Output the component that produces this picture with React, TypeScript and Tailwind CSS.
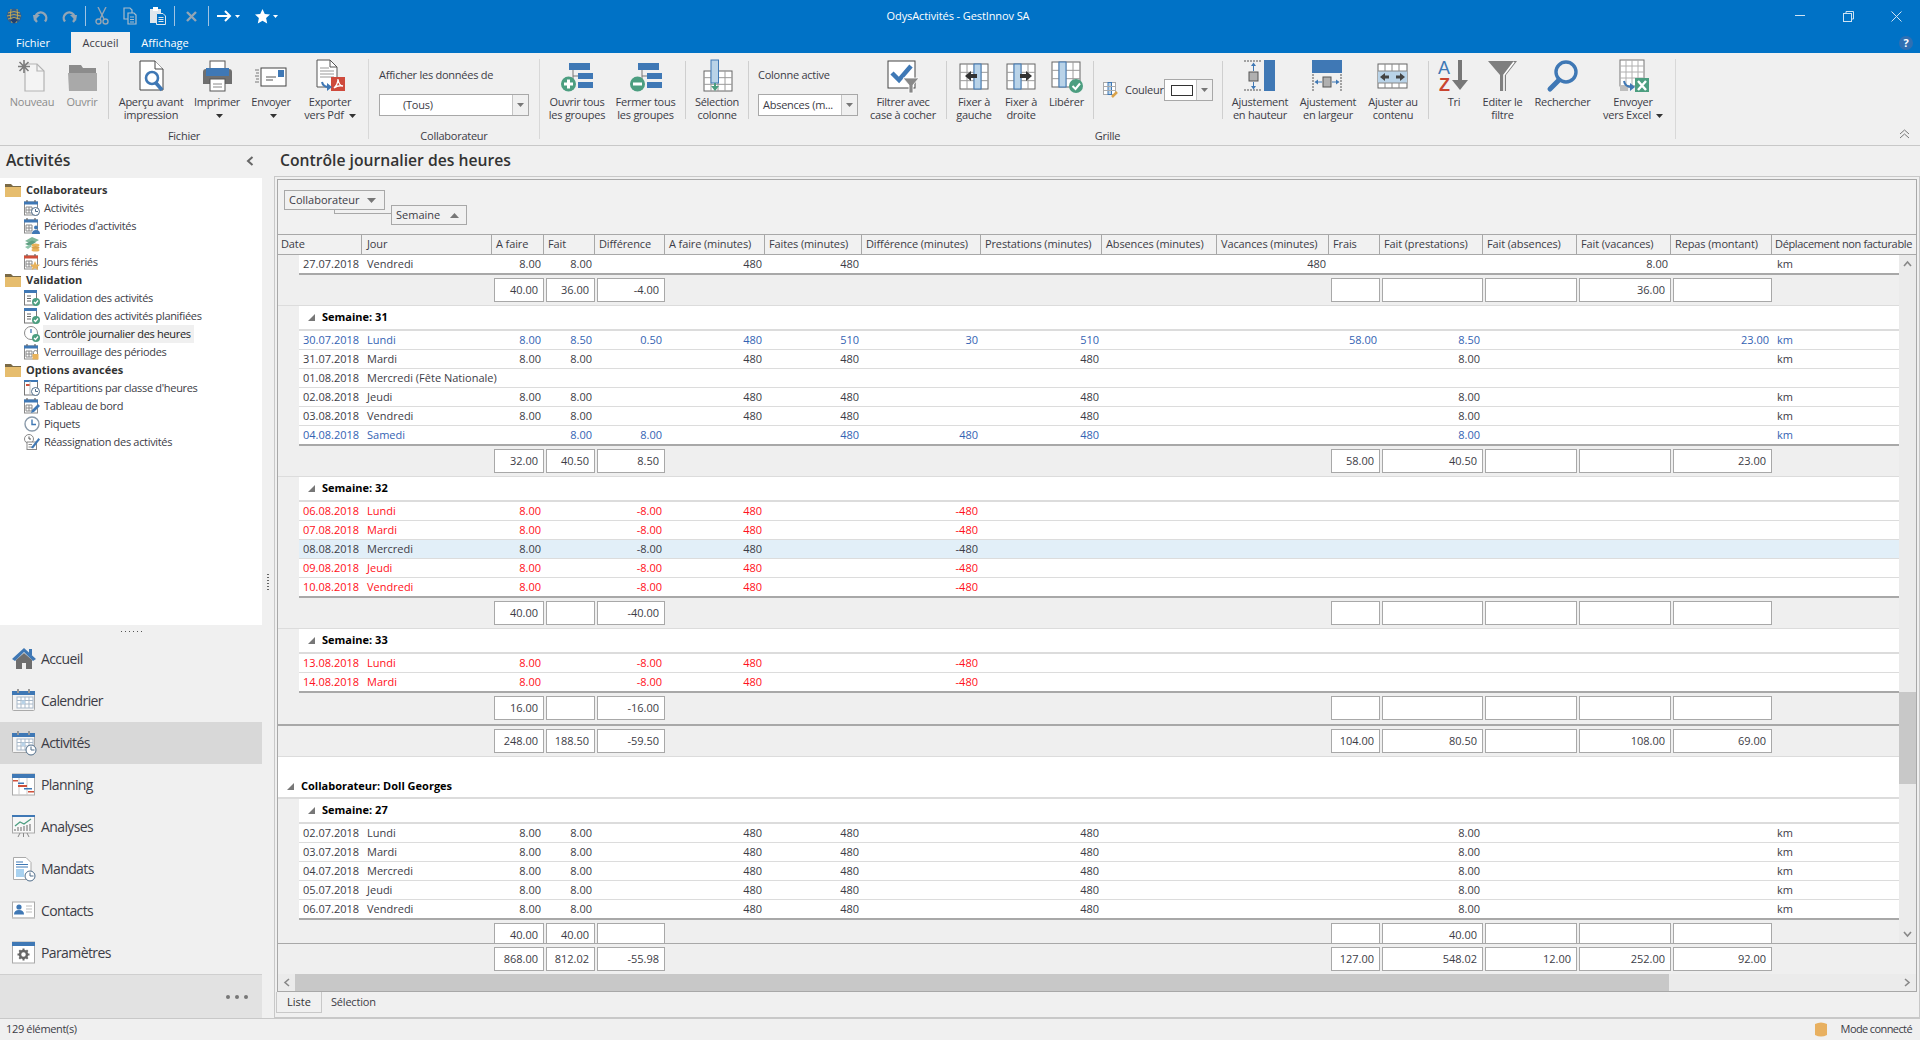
import React from "react";

const B = "#3f78b5";
const LB = "#b9d3e8";
const G = "#4c9e80";
const GR = "#6f6f6f";

const Tri = ({ c = "#333" }: { c?: string }) => (
  <svg width="7" height="4" viewBox="0 0 7 4" className="inline-block ml-[5px] align-middle"><polygon points="0,0 7,0 3.5,4" fill={c} /></svg>
);

/* ---------- quick access ---------- */
const Qsep = () => <div className="w-px h-[20px] bg-[#9fc3e3]" />;
const Undo = ({ flip }: { flip?: boolean }) => (
  <svg width="18" height="16" viewBox="0 0 18 16" style={flip ? { transform: "scaleX(-1)" } : undefined}>
    <path d="M5 13 A5.5 5.5 0 1 1 13 12.5" fill="none" stroke="#93a5b5" strokeWidth="2.4" transform="translate(0,1)" />
    <polygon points="1,7 8,7 2,13" fill="#93a5b5" />
  </svg>
);
const Scissors = () => (
  <svg width="14" height="18" viewBox="0 0 14 18" fill="none" stroke="#93a5b5" strokeWidth="1.4">
    <path d="M3 0 L9 12 M11 0 L5 12" /><circle cx="3.5" cy="14.5" r="2.5" /><circle cx="10.5" cy="14.5" r="2.5" />
  </svg>
);
const CopyI = () => (
  <svg width="14" height="18" viewBox="0 0 14 18" fill="#0072c6" stroke="#a9bccb" strokeWidth="1.2">
    <path d="M1 1 H7 L9 3 V12 H1 Z" /><path d="M5 6 H11 L13 8 V17 H5 Z" /><path d="M7 10 H11 M7 12.5 H11 M7 15 H11" />
  </svg>
);
const PasteI = () => (
  <svg width="16" height="18" viewBox="0 0 16 18">
    <rect x="0" y="2" width="11" height="14" fill="#dfe6ec" />
    <rect x="3" y="0" width="5" height="4" fill="#ffffff" />
    <path d="M6.5 6.5 H13 L15.5 9 V17.5 H6.5 Z" fill="#0072c6" stroke="#dfe6ec" />
    <path d="M8.5 10.5 H13.5 M8.5 12.5 H13.5 M8.5 14.5 H13.5" stroke="#dfe6ec" />
  </svg>
);

/* ---------- ribbon 32px icons ---------- */
const S = ({ children }: { children: React.ReactNode }) => (
  <svg width="32" height="32" viewBox="0 0 32 32" className="overflow-visible">{children}</svg>
);
const IcoNew = () => (
  <S>
    <path d="M9 4 H21 L28 11 V31 H9 Z" fill="#f4f4f4" stroke="#b3b3b3" strokeWidth="1.2" />
    <path d="M21 4 V11 H28" fill="none" stroke="#b3b3b3" strokeWidth="1.2" />
    <path d="M8 0 V13 M2 6.5 H14 M3.5 2 L12.5 11 M12.5 2 L3.5 11" stroke="#7c7c7c" strokeWidth="1.6" />
  </S>
);
const IcoOpen = () => (
  <S>
    <path d="M3 5 H15 L17 8 H30 V14 H3 Z" fill="#8c8c8c" />
    <path d="M2 13 H31 V31 H3 Z" fill="#a9a9a9" />
  </S>
);
const IcoPreview = () => (
  <S>
    <path d="M5 1 H20 L28 9 V30 H5 Z" fill="#fff" stroke="#444" strokeWidth="1" />
    <path d="M20 1 V9 H28" fill="#fff" stroke="#444" strokeWidth="1" />
    <circle cx="17" cy="18" r="6" fill="#fff" stroke={B} strokeWidth="2.6" />
    <path d="M21 23 L27 30" stroke={B} strokeWidth="3.6" />
  </S>
);
const IcoPrint = () => (
  <S>
    <rect x="9" y="1" width="15" height="9" fill="#fff" stroke="#555" />
    <path d="M2 12 Q2 9 5 9 H28 Q31 9 31 12 V24 H2 Z" fill={GR} />
    <rect x="5" y="8" width="23" height="8" fill={B} />
    <rect x="9" y="19" width="15" height="12" fill="#fff" stroke="#555" />
    <path d="M12 24 H21 M12 27 H21" stroke="#888" />
  </S>
);
const IcoSend = () => (
  <S>
    <rect x="6" y="8" width="25" height="18" fill="#fff" stroke="#444" />
    <rect x="23" y="10" width="6" height="7" fill={B} />
    <path d="M11 17 H21 M11 20 H18" stroke="#555" />
    <path d="M0 10 H4 M1 13 H4 M0 16 H4 M1 19 H4 M0 22 H4" stroke="#777" />
  </S>
);
const IcoPdf = () => (
  <S>
    <path d="M3 0 H16 L23 7 V27 H3 Z" fill="#fff" stroke="#555" />
    <path d="M16 0 V7 H23" fill="none" stroke="#555" />
    <path d="M6 8 H15 M6 11 H20 M6 14 H20 M6 17 H20" stroke="#999" />
    <rect x="17" y="17" width="14" height="14" fill="#cf4a3c" />
    <path d="M20 28 Q24 24 24 19 Q25 26 29 26 Q24 25 20 28 Z" fill="none" stroke="#fff" strokeWidth="1.3" />
    <path d="M8 22 Q9 27 15 27" fill="none" stroke={B} strokeWidth="2" />
    <polygon points="13,23 18,27 13,31" fill={B} />
  </S>
);
const IcoGroups = ({ minus }: { minus?: boolean }) => (
  <S>
    <rect x="8" y="3" width="21" height="7" fill={B} />
    <rect x="17" y="13" width="15" height="6" fill={B} />
    <rect x="17" y="22" width="15" height="6" fill={B} />
    <path d="M12 10 V22 M12 16 H17" stroke="#777" />
    <circle cx="7.5" cy="24" r="7.5" fill={G} />
    {minus ? <rect x="3" y="22.5" width="9" height="3" fill="#fff" /> : <path d="M3 24 H12 M7.5 19.5 V28.5" stroke="#fff" strokeWidth="3" />}
  </S>
);
const GridBase = ({ x = 3, y = 6, w = 28, h = 25 }: { x?: number; y?: number; w?: number; h?: number }) => {
  const cw = w / 4;
  const rh = h / 3;
  return (
    <g>
      <rect x={x} y={y} width={w} height={h} fill="#fff" stroke="#666" />
      {[1, 2, 3].map((i) => <path key={i} d={`M${x + i * cw} ${y} V${y + h}`} stroke="#9c9c9c" />)}
      {[1, 2].map((i) => <path key={i} d={`M${x} ${y + i * rh} H${x + w}`} stroke="#9c9c9c" />)}
    </g>
  );
};
const IcoSelCol = () => (
  <S>
    <GridBase x={3} y={11} w={28} h={20} />
    <rect x="10" y="0" width="7.5" height="23" fill={LB} stroke={B} />
    <path d="M14 23 V27" stroke={G} strokeWidth="2" />
    <polygon points="10,26 18,26 14,31" fill={G} />
  </S>
);
const IcoFilterCheck = () => (
  <S>
    <rect x="1" y="1" width="27" height="27" fill="#fff" stroke="#444" />
    <path d="M5 13 L12 20 L24 6" fill="none" stroke={B} strokeWidth="4.5" />
    <polygon points="16,18 32,18 26,25 26,33 22,33 22,25" fill="#888" stroke="#fff" strokeWidth="0.8" />
  </S>
);
const IcoFix = ({ right }: { right?: boolean }) => (
  <S>
    <GridBase x={2} y={4} w={28} h={25} />
    <rect x="16" y="4" width="7" height="25" fill={LB} stroke={B} style={right ? { transform: "translateX(-7px)" } : undefined} />
    {right
      ? <g><rect x="15" y="14" width="8" height="4" fill="#333" /><polygon points="21,11 27,16 21,21" fill="#333" /></g>
      : <g><rect x="11" y="14" width="8" height="4" fill="#333" /><polygon points="13,11 7,16 13,21" fill="#333" /></g>}
  </S>
);
const IcoFree = () => (
  <S>
    <GridBase x={1} y={2} w={28} h={25} />
    <rect x="8" y="2" width="7" height="25" fill={LB} stroke={B} />
    <circle cx="25" cy="26" r="7" fill={G} />
    <path d="M21.5 26 L24.5 29 L29 23.5" fill="none" stroke="#fff" strokeWidth="2" />
  </S>
);
const IcoHeight = () => (
  <S>
    <path d="M0 1 H18 M0 30 H18" stroke="#555" strokeDasharray="2 1" />
    <rect x="20" y="0" width="11" height="31" fill={B} />
    <rect x="5" y="12" width="9" height="9" fill="#b0b0b0" stroke="#555" />
    <path d="M9.5 5 V11 M9.5 22 V28" stroke={B} />
    <polygon points="7,6 12,6 9.5,2.5" fill={B} />
    <polygon points="7,26 12,26 9.5,29.5" fill={B} />
  </S>
);
const IcoWidth = () => (
  <S>
    <rect x="0" y="0" width="30" height="13" fill={B} />
    <path d="M1 14 V31 M29 14 V31" stroke="#555" strokeDasharray="2 1" />
    <rect x="11" y="17" width="8" height="10" fill="#b0b0b0" stroke="#555" />
    <path d="M4 22 H10 M20 22 H26" stroke={B} />
    <polygon points="6,19.5 6,24.5 2.5,22" fill={B} />
    <polygon points="24,19.5 24,24.5 27.5,22" fill={B} />
  </S>
);
const IcoFit = () => (
  <S>
    <rect x="1" y="4" width="29" height="24" fill="#fff" stroke="#666" />
    <rect x="1" y="11" width="29" height="12" fill={LB} />
    <path d="M1 11 H30 M1 23 H30 M8 4 V11 M15 4 V11 M22 4 V11 M8 23 V28 M15 23 V28 M22 23 V28" stroke="#888" />
    <rect x="6" y="15.5" width="6" height="3" fill="#444" /><polygon points="8,13 3,17 8,21" fill="#444" />
    <rect x="19" y="15.5" width="6" height="3" fill="#444" /><polygon points="23,13 28,17 23,21" fill="#444" />
  </S>
);
const IcoSort = () => (
  <S>
    <text x="0" y="14" fontSize="18" fill={B} fontFamily="'Liberation Sans',sans-serif">A</text>
    <text x="1" y="31" fontSize="18" fontWeight="700" fill="#c9452f" fontFamily="'Liberation Sans',sans-serif">Z</text>
    <path d="M22 0 V26" stroke="#777" strokeWidth="4" />
    <polygon points="14,20 30,20 22,30" fill="#777" />
  </S>
);
const IcoFilter = () => (
  <S>
    <polygon points="1,1 30,1 19,15 19,31 13,31 13,15" fill="#7f7f7f" />
    <path d="M27 2 L17 15 V31" fill="none" stroke="#fff" strokeWidth="1.6" />
  </S>
);
const IcoSearch = () => (
  <S>
    <circle cx="19" cy="12" r="10" fill="none" stroke={B} strokeWidth="3.4" />
    <path d="M12 20 L3 29" stroke={B} strokeWidth="5" strokeLinecap="round" />
  </S>
);
const IcoExcel = () => (
  <S>
    <rect x="3" y="0" width="24" height="26" fill="#fff" stroke="#777" />
    <path d="M9 0 V26 M15 0 V26 M21 0 V26 M3 6 H27 M3 12 H27 M3 18 H27" stroke="#b0b0b0" />
    <rect x="3" y="25" width="8" height="6" fill="#bdbdbd" />
    <rect x="18" y="18" width="14" height="14" fill={G} />
    <path d="M21 21 L29 30 M29 21 L21 30" stroke="#fff" strokeWidth="2.4" />
    <path d="M7 21 Q8 27 15 27" fill="none" stroke={B} strokeWidth="2" />
    <polygon points="13,23 18,27 13,31" fill={B} />
  </S>
);

/* ---------- tree 16 px icons ---------- */
const MiniClock = ({ x, y, r }: { x: number; y: number; r: number }) => (
  <g>
    <circle cx={x} cy={y} r={r} fill="#fff" stroke="#4f6d8a" />
    <path d={`M${x} ${y - r + 1.5} V${y} H${x + r - 1.5}`} stroke="#4f6d8a" fill="none" />
  </g>
);
const MiniCheck = () => (
  <g>
    <circle cx="12" cy="12" r="4" fill={G} />
    <path d="M10 12 L11.5 13.5 L14 10.5" stroke="#fff" strokeWidth="1.2" fill="none" />
  </g>
);
const Cal = ({ top = B, over }: { top?: string; over: "clock" | "person" | "star" | "lock" | "pen" }) => (
  <svg width="16" height="16" viewBox="0 0 16 16">
    <rect x="0.5" y="2" width="13" height="13" fill="#fff" stroke="#8a8a8a" />
    <rect x="0" y="1.5" width="14" height="3" fill={top} />
    <path d="M3 0 V2 M11 0 V2" stroke="#666" strokeWidth="1.2" />
    <path d="M2 7 H8 V13 H2 Z M5 7 V13 M2 10 H8" stroke="#8a8a8a" fill="none" />
    {over === "clock" && <MiniClock x={11.5} y={11.5} r={4} />}
    {over === "person" && <g fill={B}><circle cx="12" cy="9.5" r="2" /><path d="M8 16 Q8 12 12 12 Q16 12 16 16 Z" /></g>}
    {over === "star" && <polygon points="11,7 12.5,10.5 16,10.8 13.4,13 14.2,16 11,14.3 7.8,16 8.6,13 6,10.8 9.5,10.5" fill="#e8b25a" />}
    {over === "lock" && <g><path d="M9.5 10 V8.5 A2 2 0 0 1 13.5 8.5 V10" fill="none" stroke="#888" /><rect x="8.5" y="10" width="6" height="5.5" fill="#e8b25a" /></g>}
    {over === "pen" && <path d="M7 15 L8 12 L14 6 L16 8 L10 14 Z" fill={B} />}
  </svg>
);
const Fees = () => (
  <svg width="16" height="16" viewBox="0 0 16 16">
    <path d="M1 5 L8 1 L15 4 L8 8 Z" fill="#7fb89c" /><path d="M1 8 L8 4.5 L12 6 L6 10 Z" fill="#5f9f82" /><path d="M1 11 L6 8.5 L8 10 L4 13 Z" fill="#8fc5ab" />
    <ellipse cx="11.5" cy="9" rx="4" ry="1.6" fill="#e8b25a" /><ellipse cx="11.5" cy="11.5" rx="4" ry="1.6" fill="#d9a24a" /><ellipse cx="11.5" cy="14" rx="4" ry="1.6" fill="#e8b25a" />
  </svg>
);
const DocCheck = () => (
  <svg width="16" height="16" viewBox="0 0 16 16">
    <rect x="0.5" y="0.5" width="12" height="14.5" fill="#fff" stroke="#777" />
    <rect x="0" y="0" width="13" height="3" fill={B} />
    <path d="M3 6 H7 M3 8.5 H7 M3 11 H7" stroke="#666" />
    <MiniCheck />
  </svg>
);
const ClockCheck = () => (
  <svg width="16" height="16" viewBox="0 0 16 16">
    <circle cx="7" cy="7" r="6.5" fill="#fff" stroke="#8a8a8a" />
    <path d="M7 3 V7" stroke={B} strokeWidth="1.3" />
    <MiniCheck />
  </svg>
);
const Repart = () => (
  <svg width="16" height="16" viewBox="0 0 16 16">
    <rect x="0.5" y="0.5" width="13" height="14.5" fill="#fff" stroke="#777" />
    <rect x="0" y="0" width="14" height="2" fill={B} />
    <rect x="2" y="4" width="4" height="2" fill="#d0503a" />
    <path d="M6 1 V15" stroke="#bbb" />
    <MiniClock x={11.5} y={11.5} r={4} />
  </svg>
);
const Piquet = () => (
  <svg width="16" height="16" viewBox="0 0 16 16">
    <circle cx="8" cy="8" r="7" fill="#fff" stroke="#8a9aaa" strokeWidth="1.4" />
    <path d="M8 3.5 V8.5 H12" stroke={B} fill="none" strokeWidth="1.4" />
  </svg>
);
const Reassign = () => (
  <svg width="16" height="16" viewBox="0 0 16 16">
    <circle cx="5" cy="5" r="4.5" fill="#fff" stroke="#888" />
    <path d="M5 2.5 V5 H7" stroke="#555" fill="none" />
    <rect x="3" y="8" width="9.5" height="7.5" fill="#fff" stroke="#888" />
    <path d="M4.5 10.5 H8 M4.5 13 H8" stroke="#888" />
    <path d="M7 13.5 L14.5 4 L16 5.5 L9 14.5 Z" fill={B} />
  </svg>
);
const Folder = () => (
  <svg width="16" height="13" viewBox="0 0 16 13">
    <path d="M0 0 H6 L8 2 H16 V3 H0 Z" fill="#7a6a46" />
    <rect x="0" y="3" width="16" height="10" fill="#e6bd6e" />
  </svg>
);

/* ---------- nav 24 px icons ---------- */
const N = ({ children }: { children: React.ReactNode }) => <svg width="24" height="24" viewBox="0 0 24 24" className="overflow-visible">{children}</svg>;
const NavCal = ({ clock }: { clock?: boolean }) => (
  <N>
    <rect x="0.5" y="2.5" width="22" height="19" rx="1" fill="#f4f4f4" stroke="#aaa" />
    <rect x="0" y="2" width="23" height="4" fill={B} />
    <rect x="5" y="0" width="2" height="4" fill="#999" /><rect x="16" y="0" width="2" height="4" fill="#999" />
    <rect x="5" y="8" width="16" height="11" fill="#fff" stroke="#a9b9c9" />
    <path d="M9 8 V19 M13 8 V19 M17 8 V19 M5 11.5 H21 M5 15 H21" stroke="#a9b9c9" />
    <rect x="9.5" y="11.5" width="3.5" height="3.5" fill={LB} />
    {clock && <MiniClock x={19} y={19} r={5} />}
  </N>
);
const NavHome = () => (
  <N>
    <polygon points="12,1 24,12 21,14 12,5 3,14 0,12" fill={B} />
    <rect x="17" y="2" width="3" height="6" fill={B} />
    <path d="M4 13 L12 6 L20 13 V22 H14 V16 H10 V22 H4 Z" fill="#6e6e6e" />
  </N>
);
const NavPlan = () => (
  <N>
    <rect x="0.5" y="1" width="22" height="21" fill="#fff" stroke="#aaa" />
    <rect x="0" y="1" width="23" height="4" fill={B} />
    <path d="M7 5 V22 M15 5 V22" stroke="#ccc" />
    <rect x="1" y="7" width="5" height="1.5" fill="#d0503a" /><rect x="6" y="9.5" width="6" height="1.5" fill={B} />
    <rect x="6" y="12" width="9" height="2" fill="#d0503a" /><rect x="12" y="15" width="8" height="1.5" fill={B} />
    <rect x="16" y="18" width="6" height="1.5" fill="#d0503a" />
  </N>
);
const NavAna = () => (
  <N>
    <rect x="0.5" y="1" width="22" height="17" fill="#f7f7f7" stroke="#aaa" />
    <rect x="0" y="0" width="23" height="2" fill={B} />
    <path d="M3 14 V16 M6 12 V16 M9 12 V16 M12 11 V16 M15 10 V16 M18 9 V16" stroke="#999" strokeWidth="1.5" />
    <path d="M3 11 L8 7 L12 9 L19 4" stroke={G} strokeWidth="1.3" fill="none" />
    <path d="M8 18 L6 22 M15 18 L17 22 M11.5 18 V22" stroke="#888" />
  </N>
);
const NavDoc = () => (
  <N>
    <path d="M1.5 0.5 H14 L19 5.5 V22.5 H1.5 Z" fill="#fff" stroke="#aaa" />
    <path d="M4 5 H11 M4 7.5 H16 M4 10 H16" stroke={B} />
    <rect x="4" y="12" width="8" height="8" fill="#a9d2f0" />
    <MiniClock x={18} y={19} r={5} />
  </N>
);
const NavCont = () => (
  <N>
    <rect x="0.5" y="3" width="22" height="16" fill="#fff" stroke="#aaa" />
    <rect x="0.5" y="18" width="22" height="1.5" fill="#ccc" />
    <circle cx="7" cy="8" r="2.6" fill={B} />
    <path d="M2 15.5 Q2 11 7 11 Q12 11 12 15.5 Z" fill={B} />
    <path d="M14 7 H20 M14 10 H20 M14 13 H20" stroke="#bbb" />
  </N>
);
const NavParam = () => (
  <N>
    <rect x="0.5" y="1" width="22" height="21" fill="#fff" stroke="#aaa" />
    <rect x="0" y="1" width="23" height="4" fill={B} />
    <circle cx="11.5" cy="13.5" r="3.5" fill="none" stroke="#666" strokeWidth="2.5" />
    <path d="M11.5 7.5 V9.5 M11.5 17.5 V19.5 M5.5 13.5 H7.5 M15.5 13.5 H17.5 M7.3 9.3 L8.7 10.7 M14.3 16.3 L15.7 17.7 M15.7 9.3 L14.3 10.7 M8.7 16.3 L7.3 17.7" stroke="#666" strokeWidth="2" />
  </N>
);

/* ---------- ribbon parts ---------- */
const Btn = ({ w, icon, l1, l2, dis, tri }: { w: string; icon: React.ReactNode; l1: string; l2?: string; dis?: boolean; tri?: boolean }) => (
  <div className={`${w} flex flex-col items-center pt-px shrink-0 ${dis ? "text-[#8c8c8c]" : ""}`}>
    <div className="h-[32px] w-[32px] flex items-center justify-center">{icon}</div>
    <div className="mt-[3px] text-center leading-[13px] whitespace-nowrap">
      <div>{l1}</div>
      {(l2 || tri) && <div className="h-[13px]">{l2}{tri && <Tri />}</div>}
    </div>
  </div>
);
const Sep = () => <div className="w-px h-[58px] mt-[2px] bg-[#cfcfcf] shrink-0" />;
const Combo = ({ w, text, pl }: { w: string; text: string; pl: string }) => (
  <div className={`${w} h-[22px] flex border border-[#a8a8a8] bg-white items-center`}>
    <div className={`flex-1 ${pl} leading-[20px] whitespace-nowrap overflow-hidden`}>{text}</div>
    <div className="w-[16px] h-full border-l border-[#c4c4c4] bg-[#f0f0f0] flex items-center justify-center">
      <svg width="7" height="4" viewBox="0 0 7 4"><polygon points="0,0 7,0 3.5,4" fill="#777" /></svg>
    </div>
  </div>
);

/* ---------- grid ---------- */
const COLS = "grid-cols-[84px_130px_52px_51px_70px_100px_97px_119px_121px_115px_112px_51px_103px_94px_94px_101px_144px]";
const COLS_R = "grid-cols-[63px_130px_52px_51px_70px_100px_97px_119px_121px_115px_112px_51px_103px_94px_94px_101px_144px]";
const HEAD = ["Date", "Jour", "A faire", "Fait", "Différence", "A faire (minutes)", "Faites (minutes)", "Différence (minutes)", "Prestations (minutes)", "Absences (minutes)", "Vacances (minutes)", "Frais", "Fait (prestations)", "Fait (absences)", "Fait (vacances)", "Repas (montant)", "Déplacement non facturable"];

type Tone = "n" | "b" | "r" | "s";
const Row = ({ v, t = "n", last }: { v: string[]; t?: Tone; last?: boolean }) => {
  const color = t === "b" ? "text-[#3463b3]" : t === "r" ? "text-[#ff1020]" : "text-[#3c3c46]";
  const bg = t === "s" ? "bg-[#e2eff8]" : "bg-white";
  const h = last ? "h-[20px] border-b-2 border-[#a8a8a8]" : "h-[19px] border-b border-[#dcdcdc]";
  return (
    <div className="flex shrink-0">
      <div className="w-[21px] bg-[#efefef] shrink-0" />
      <div className={`grid shrink-0 ${COLS_R} ${h} ${bg} ${color} leading-[18px]`}>
        {v.map((x, i) => (
          <div key={i} className={i === 0 ? "pl-[4px] whitespace-nowrap" : i === 1 ? "pl-[5px] whitespace-nowrap" : i === 16 ? "pl-[5px]" : "text-right pr-[3px]"}>{x}</div>
        ))}
      </div>
    </div>
  );
};
const day = (d: string, j: string) => [d, j, "8.00", "8.00", "", "480", "480", "", "480", "", "", "", "8.00", "", "", "", "km"];
const miss = (d: string, j: string) => [d, j, "8.00", "", "-8.00", "480", "", "-480", "", "", "", "", "", "", "", "", ""];

const Sum = ({ v, cls = "h-[31px] border-b border-[#dcdcdc]" }: { v: string[]; cls?: string }) => {
  const cells: (string | null)[] = [null, null, v[0], v[1], v[2], null, null, null, null, null, null, v[3], v[4], v[5], v[6], v[7], null];
  return (
    <div className={`grid shrink-0 w-[1638px] ${COLS} ${cls} bg-[#efefef] pt-[3px]`}>
      {cells.map((c, i) => c === null ? <div key={i} /> : (
        <div key={i} className="ml-[2px] h-[24px] border border-[#a8a8a8] bg-white text-right pr-[5px] leading-[22px] text-[#3c3c46]">{c}</div>
      ))}
    </div>
  );
};
const GTri = () => <svg width="7" height="7" viewBox="0 0 7 7" className="shrink-0"><polygon points="7,0 7,7 0,7" fill="#777" /></svg>;
const Week = ({ n }: { n: number }) => (
  <div className="flex h-[25px] shrink-0">
    <div className="w-[21px] bg-[#efefef] shrink-0" />
    <div className="flex-1 bg-white border-b-2 border-[#dcdcdc] flex items-center pl-[9px]">
      <GTri />
      <span className="ml-[7px] font-bold text-black">Semaine: {n}</span>
    </div>
  </div>
);

const TREE: { t: string; i?: React.ReactNode; bold?: boolean; sel?: boolean }[] = [
  { t: "Collaborateurs", bold: true },
  { t: "Activités", i: <Cal over="clock" /> },
  { t: "Périodes d'activités", i: <Cal over="person" /> },
  { t: "Frais", i: <Fees /> },
  { t: "Jours fériés", i: <Cal top="#d0503a" over="star" /> },
  { t: "Validation", bold: true },
  { t: "Validation des activités", i: <DocCheck /> },
  { t: "Validation des activités planifiées", i: <DocCheck /> },
  { t: "Contrôle journalier des heures", i: <ClockCheck />, sel: true },
  { t: "Verrouillage des périodes", i: <Cal over="lock" /> },
  { t: "Options avancées", bold: true },
  { t: "Répartitions par classe d'heures", i: <Repart /> },
  { t: "Tableau de bord", i: <Cal over="pen" /> },
  { t: "Piquets", i: <Piquet /> },
  { t: "Réassignation des activités", i: <Reassign /> },
];
const NAV: { t: string; i: React.ReactNode; sel?: boolean }[] = [
  { t: "Accueil", i: <NavHome /> },
  { t: "Calendrier", i: <NavCal /> },
  { t: "Activités", i: <NavCal clock />, sel: true },
  { t: "Planning", i: <NavPlan /> },
  { t: "Analyses", i: <NavAna /> },
  { t: "Mandats", i: <NavDoc /> },
  { t: "Contacts", i: <NavCont /> },
  { t: "Paramètres", i: <NavParam /> },
];

const Chev = ({ d }: { d: string }) => (
  <svg width="9" height="7" viewBox="0 0 9 7" fill="none" stroke="#888" strokeWidth="1.6"><path d={d} /></svg>
);

export default function App() {
  return (
    <div className="w-[1920px] h-[1040px] flex flex-col overflow-hidden bg-[#f0f0f0] font-['Open_Sans',sans-serif] text-[11px] text-[#3c3c46]">
      {/* Title bar */}
      <div className="h-[32px] bg-[#0072c6] flex items-center justify-between relative shrink-0 text-white">
        <div className="flex items-center">
          <svg width="16" height="16" viewBox="0 0 16 16" className="ml-[6px]">
            <circle cx="8" cy="8" r="7.5" fill="#2f5f8f" />
            <path d="M2 5 Q8 2 14 5 M1 8 Q8 5 15 8 M2 11 Q8 8 14 11 M5 1 Q3 8 6 15 M11 1 Q13 8 10 15" stroke="#d9b24a" fill="none" strokeWidth="0.8" />
            <path d="M4 12 L8 15.5 L12 12 L8 10 Z" fill="#1f3f6f" />
          </svg>
          <div className="ml-[10px]"><Undo /></div>
          <div className="ml-[10px]"><Undo flip /></div>
          <div className="ml-[7px]"><Qsep /></div>
          <div className="ml-[9px]"><Scissors /></div>
          <div className="ml-[14px]"><CopyI /></div>
          <div className="ml-[13px]"><PasteI /></div>
          <div className="ml-[8px]"><Qsep /></div>
          <svg width="11" height="11" viewBox="0 0 11 11" className="ml-[11px]"><path d="M1 1 L10 10 M10 1 L1 10" stroke="#93a5b5" strokeWidth="2.4" /></svg>
          <div className="ml-[11px]"><Qsep /></div>
          <svg width="15" height="12" viewBox="0 0 15 12" className="ml-[8px]"><path d="M0 6 H13 M8 1 L13 6 L8 11" stroke="#fff" strokeWidth="2" fill="none" /></svg>
          <svg width="5" height="3" viewBox="0 0 5 3" className="ml-[3px]"><polygon points="0,0 5,0 2.5,3" fill="#fff" /></svg>
          <svg width="15" height="15" viewBox="0 0 15 15" className="ml-[15px]"><polygon points="7.5,0 9.8,5 15,5.6 11.1,9.1 12.2,14.5 7.5,11.7 2.8,14.5 3.9,9.1 0,5.6 5.2,5" fill="#fff" /></svg>
          <svg width="5" height="3" viewBox="0 0 5 3" className="ml-[3px]"><polygon points="0,0 5,0 2.5,3" fill="#fff" /></svg>
        </div>
        <div className="absolute left-0 right-0 text-center pr-[4px] tracking-[-0.1px]">OdysActivités - GestInnov SA</div>
        <div className="flex items-center">
          <svg width="10" height="2" viewBox="0 0 10 2"><rect width="10" height="1" fill="#cfe3f3" /></svg>
          <svg width="11" height="11" viewBox="0 0 11 11" className="ml-[38px]" fill="none" stroke="#cfe3f3"><rect x="0.5" y="2.5" width="8" height="8" /><path d="M3 2.5 V0.5 H10.5 V8 H8.5" /></svg>
          <svg width="11" height="11" viewBox="0 0 11 11" className="ml-[37px] mr-[18px]" stroke="#cfe3f3"><path d="M0.5 0.5 L10.5 10.5 M10.5 0.5 L0.5 10.5" /></svg>
        </div>
      </div>
      {/* Tabs */}
      <div className="h-[21px] bg-[#0072c6] flex shrink-0 text-white relative">
        <div className="w-[71px] text-center leading-[21px] pr-[5px]">Fichier</div>
        <div className="w-[59px] bg-[#f0f0f0] text-[#3c3c46] text-center leading-[22px]">Accueil</div>
        <div className="w-[70px] text-center leading-[22px]">Affichage</div>
        <div className="ml-auto mr-[7px] mt-[4px] w-[14px] h-[14px] rounded-full bg-[#2f6fb3] text-center leading-[14px] font-bold">?</div>
      </div>
      {/* Ribbon */}
      <div className="h-[93px] shrink-0 flex items-start pt-[6px] border-b border-[#c8c8c8] tracking-[-0.25px]">
        <div className="w-[369px] h-[80px] border-r border-[#d8d8d8] flex flex-col shrink-0">
          <div className="h-[70px] flex pl-[7px] shrink-0">
            <Btn w="w-[50px]" icon={<IcoNew />} l1="Nouveau" dis />
            <Btn w="w-[50px]" icon={<IcoOpen />} l1="Ouvrir" dis />
            <div className="w-px ml-px"><Sep /></div>
            <Btn w="w-[84px]" icon={<IcoPreview />} l1="Aperçu avant" l2="impression" />
            <Btn w="w-[48px]" icon={<IcoPrint />} l1="Imprimer" tri />
            <Btn w="w-[60px]" icon={<IcoSend />} l1="Envoyer" tri />
            <Btn w="w-[58px]" icon={<IcoPdf />} l1="Exporter" l2="vers Pdf" tri />
          </div>
          <div className="text-center leading-[14px] shrink-0">Fichier</div>
        </div>
        <div className="w-[171px] h-[80px] border-r border-[#d8d8d8] flex flex-col shrink-0">
          <div className="h-[70px] pl-[10px] pt-[9px] shrink-0">
            <div className="leading-[14px]">Afficher les données de</div>
            <div className="mt-[12px]"><Combo w="w-[150px]" text="(Tous)" pl="pl-[23px]" /></div>
          </div>
          <div className="text-center leading-[14px] shrink-0">Collaborateur</div>
        </div>
        <div className="w-[1136px] h-[80px] border-r border-[#d8d8d8] flex flex-col shrink-0">
          <div className="h-[70px] flex pl-[5px] shrink-0">
            <Btn w="w-[64px]" icon={<IcoGroups />} l1="Ouvrir tous" l2="les groupes" />
            <Btn w="w-[73px]" icon={<IcoGroups minus />} l1="Fermer tous" l2="les groupes" />
            <div className="ml-[3px]"><Sep /></div>
            <Btn w="w-[62px]" icon={<IcoSelCol />} l1="Sélection" l2="colonne" />
            <Sep />
            <div className="ml-[9px] w-[100px] pt-[9px] shrink-0">
              <div className="leading-[14px]">Colonne active</div>
              <div className="mt-[12px]"><Combo w="w-[100px]" text="Absences (m..." pl="pl-[4px]" /></div>
            </div>
            <div className="ml-[2px]"><Btn w="w-[86px]" icon={<IcoFilterCheck />} l1="Filtrer avec" l2="case à cocher" /></div>
            <Sep />
            <div className="ml-[3px]"><Btn w="w-[48px]" icon={<IcoFix />} l1="Fixer à" l2="gauche" /></div>
            <Btn w="w-[46px]" icon={<IcoFix right />} l1="Fixer à" l2="droite" />
            <Btn w="w-[45px]" icon={<IcoFree />} l1="Libérer" />
            <div className="ml-[4px]"><Sep /></div>
            <div className="w-[128px] shrink-0 mt-[20px] h-[22px] pl-[9px] pr-[9px] flex items-center">
              <svg width="15" height="16" viewBox="0 0 15 16" className="shrink-0">
                <rect x="0.5" y="0.5" width="12" height="12" fill="#fff" stroke="#aaa" />
                <rect x="5" y="0.5" width="3.5" height="12" fill={LB} stroke={B} />
                <path d="M0.5 4.5 H12.5 M0.5 8.5 H12.5" stroke="#aaa" />
                <path d="M9 15 L14 10" stroke="#d9a24a" strokeWidth="2.5" />
              </svg>
              <span className="ml-[7px]">Couleur</span>
              <div className="ml-auto w-[50px] h-[22px] border border-[#a8a8a8] bg-white flex items-center">
                <div className="ml-[6px] w-[22px] h-[11px] border border-[#333] bg-white" />
                <div className="ml-auto w-[16px] h-full border-l border-[#c4c4c4] bg-[#f0f0f0] flex items-center justify-center">
                  <svg width="7" height="4" viewBox="0 0 7 4"><polygon points="0,0 7,0 3.5,4" fill="#777" /></svg>
                </div>
              </div>
            </div>
            <Sep />
            <Btn w="w-[74px]" icon={<IcoHeight />} l1="Ajustement" l2="en hauteur" />
            <Btn w="w-[62px]" icon={<IcoWidth />} l1="Ajustement" l2="en largeur" />
            <Btn w="w-[68px]" icon={<IcoFit />} l1="Ajuster au" l2="contenu" />
            <div className="ml-px"><Sep /></div>
            <Btn w="w-[50px]" icon={<IcoSort />} l1="Tri" />
            <Btn w="w-[47px]" icon={<IcoFilter />} l1="Editer le" l2="filtre" />
            <Btn w="w-[73px]" icon={<IcoSearch />} l1="Rechercher" />
            <Btn w="w-[68px]" icon={<IcoExcel />} l1="Envoyer" l2="vers Excel" tri />
          </div>
          <div className="text-center leading-[14px] shrink-0">Grille</div>
        </div>
        <svg width="11" height="10" viewBox="0 0 11 10" fill="none" stroke="#777" className="ml-auto mr-[10px] mt-[70px]">
          <path d="M1 5 L5.5 1 L10 5 M1 9 L5.5 5 L10 9" />
        </svg>
      </div>

      {/* Body */}
      <div className="flex-1 flex min-h-0">
        {/* Left */}
        <div className="w-[262px] shrink-0 flex flex-col">
          <div className="h-[32px] flex items-center justify-between pl-[6px] pr-[8px] pb-[3px] shrink-0">
            <span className="text-[15.7px] font-semibold text-[#333]">Activités</span>
            <svg width="8" height="10" viewBox="0 0 8 10" fill="none" stroke="#666" strokeWidth="2"><path d="M6.5 1 L2 5 L6.5 9" /></svg>
          </div>
          <div className="h-[447px] bg-white pt-[3px] shrink-0">
            {TREE.map((r, i) => r.bold ? (
              <div key={i} className="h-[18px] flex items-center pl-[5px] font-bold text-[#333]">
                <Folder /><span className="ml-[5px]">{r.t}</span>
              </div>
            ) : (
              <div key={i} className="h-[18px] flex items-center pl-[24px]">
                <div className="w-[16px] h-[16px] shrink-0">{r.i}</div>
                <span className={`ml-[3px] pl-px pr-[3px] leading-[18px] whitespace-nowrap tracking-[-0.32px] ${r.sel ? "bg-[#f0f0f0] text-[#222]" : ""}`}>{r.t}</span>
              </div>
            ))}
          </div>
          <div className="h-[13px] flex items-center justify-center gap-[3px] shrink-0">
            {[0, 1, 2, 3, 4, 5].map((i) => <div key={i} className="w-px h-px bg-[#555]" />)}
          </div>
          {NAV.map((n, i) => (
            <div key={i} className={`h-[42px] flex items-center pl-[12px] shrink-0 ${n.sel ? "bg-[#d8d8d8]" : ""}`}>
              <div className="w-[24px] h-[24px]">{n.i}</div>
              <span className="ml-[5px] pb-[2px] text-[14px] tracking-[-0.6px]">{n.t}</span>
            </div>
          ))}
          <div className="flex-1 bg-[#e2e2e2] border-t border-[#cfcfcf] flex items-center justify-end pr-[14px] gap-[5px]">
            {[0, 1, 2].map((i) => <div key={i} className="w-[4px] h-[4px] rounded-full bg-[#777]" />)}
          </div>
        </div>
        {/* Splitter */}
        <div className="w-[12px] shrink-0 flex flex-col items-center justify-center gap-[2px]">
          {[0, 1, 2, 3, 4, 5].map((i) => <div key={i} className="w-[2px] h-[1px] bg-[#666]" />)}
        </div>
        {/* Right */}
        <div className="flex-1 flex flex-col min-w-0">
          <div className="h-[30px] pl-[6px] pb-px flex items-center shrink-0 text-[15.7px] font-semibold text-[#333]">Contrôle journalier des heures</div>
          <div className="flex-1 border border-[#c8c8c8] p-[2px] pb-[4px] flex flex-col min-h-0">
            <div className="h-[813px] border border-[#a8a8a8] flex flex-col shrink-0 overflow-hidden">
              {/* Group panel */}
              <div className="h-[54px] bg-[#f1f1f1] shrink-0 pl-[6px] pt-[10px] relative">
                <div className="w-[101px] h-[20px] border border-[#a8a8a8] flex items-center justify-between pl-[4px] pr-[8px]">
                  <span>Collaborateur</span>
                  <svg width="9" height="5" viewBox="0 0 9 5"><polygon points="0,0 9,0 4.5,5" fill="#777" /></svg>
                </div>
                <div className="absolute left-[56px] top-[30px] w-[57px] h-[4px] border-l border-b border-[#a8a8a8]" />
                <div className="absolute left-[113px] top-[25px] w-[76px] h-[20px] border border-[#a8a8a8] flex items-center justify-between pl-[4px] pr-[7px] bg-[#f1f1f1]">
                  <span>Semaine</span>
                  <svg width="9" height="5" viewBox="0 0 9 5"><polygon points="0,5 9,5 4.5,0" fill="#777" /></svg>
                </div>
              </div>
              {/* Header */}
              <div className={`grid shrink-0 ${COLS} h-[21px] border-y border-[#a8a8a8] bg-[#f1f1f1] leading-[18px] tracking-[-0.12px]`}>
                {HEAD.map((h, i) => (
                  <div key={i} className={`whitespace-nowrap overflow-hidden ${i === 0 ? "pl-[3px]" : i === 1 ? "pl-[5px]" : i === 16 ? "pl-[3px] tracking-[-0.35px]" : "pl-[4px]"} ${i < 16 ? "border-r border-[#a8a8a8]" : ""}`}>{h}</div>
                ))}
              </div>
              {/* Rows + vertical scroll */}
              <div className="h-[688px] flex shrink-0">
                <div className="w-[1621px] overflow-hidden shrink-0 flex flex-col bg-white">
                  <Row v={["27.07.2018", "Vendredi", "8.00", "8.00", "", "480", "480", "", "", "", "480", "", "", "", "8.00", "", "km"]} last />
                  <Sum v={["40.00", "36.00", "-4.00", "", "", "", "36.00", ""]} />
                  <Week n={31} />
                  <Row t="b" v={["30.07.2018", "Lundi", "8.00", "8.50", "0.50", "480", "510", "30", "510", "", "", "58.00", "8.50", "", "", "23.00", "km"]} />
                  <Row v={day("31.07.2018", "Mardi")} />
                  <Row v={["01.08.2018", "Mercredi (Fête Nationale)", "", "", "", "", "", "", "", "", "", "", "", "", "", "", ""]} />
                  <Row v={day("02.08.2018", "Jeudi")} />
                  <Row v={day("03.08.2018", "Vendredi")} />
                  <Row t="b" last v={["04.08.2018", "Samedi", "", "8.00", "8.00", "", "480", "480", "480", "", "", "", "8.00", "", "", "", "km"]} />
                  <Sum v={["32.00", "40.50", "8.50", "58.00", "40.50", "", "", "23.00"]} />
                  <Week n={32} />
                  <Row t="r" v={miss("06.08.2018", "Lundi")} />
                  <Row t="r" v={miss("07.08.2018", "Mardi")} />
                  <Row t="s" v={miss("08.08.2018", "Mercredi")} />
                  <Row t="r" v={miss("09.08.2018", "Jeudi")} />
                  <Row t="r" last v={miss("10.08.2018", "Vendredi")} />
                  <Sum v={["40.00", "", "-40.00", "", "", "", "", ""]} />
                  <Week n={33} />
                  <Row t="r" v={miss("13.08.2018", "Lundi")} />
                  <Row t="r" last v={miss("14.08.2018", "Mardi")} />
                  <Sum v={["16.00", "", "-16.00", "", "", "", "", ""]} cls="h-[31px]" />
                  <Sum v={["248.00", "188.50", "-59.50", "104.00", "80.50", "", "108.00", "69.00"]} cls="h-[33px] border-t-2 border-b border-t-[#a8a8a8] border-b-[#dcdcdc] pt-[2px]" />
                  <div className="h-[42px] shrink-0 bg-white border-b-2 border-[#dcdcdc] flex items-end">
                    <div className="flex items-center h-[22px] pl-[9px]">
                      <GTri />
                      <span className="ml-[7px] font-bold text-black">Collaborateur: Doll Georges</span>
                    </div>
                  </div>
                  <Week n={27} />
                  <Row v={day("02.07.2018", "Lundi")} />
                  <Row v={day("03.07.2018", "Mardi")} />
                  <Row v={day("04.07.2018", "Mercredi")} />
                  <Row v={day("05.07.2018", "Jeudi")} />
                  <Row last v={day("06.07.2018", "Vendredi")} />
                  <Sum v={["40.00", "40.00", "", "", "40.00", "", "", ""]} />
                </div>
                <div className="flex-1 bg-[#ebebeb] flex flex-col">
                  <div className="h-[17px] flex items-center justify-center"><Chev d="M1 6 L4.5 2 L8 6" /></div>
                  <div className="h-[420px]" />
                  <div className="h-[92px] bg-[#c8c8c8]" />
                  <div className="flex-1" />
                  <div className="h-[17px] flex items-center justify-center"><Chev d="M1 1 L4.5 5 L8 1" /></div>
                </div>
              </div>
              <Sum v={["868.00", "812.02", "-55.98", "127.00", "548.02", "12.00", "252.00", "92.00"]} cls="h-[31px] border-t border-[#a8a8a8] pt-[3px]" />
              {/* Horizontal scroll */}
              <div className="flex h-[17px] shrink-0 bg-[#ebebeb]">
                <div className="w-[17px] flex items-center justify-center">
                  <svg width="7" height="9" viewBox="0 0 7 9" fill="none" stroke="#888" strokeWidth="1.6"><path d="M6 1 L2 4.5 L6 8" /></svg>
                </div>
                <div className="w-[1374px] bg-[#c8c8c8]" />
                <div className="flex-1 flex items-center justify-end pr-[5px]">
                  <svg width="7" height="9" viewBox="0 0 7 9" fill="none" stroke="#888" strokeWidth="1.6"><path d="M1 1 L5 4.5 L1 8" /></svg>
                </div>
              </div>
            </div>
            {/* Tabs */}
            <div className="flex h-[21px] shrink-0">
              <div className="w-[46px] -ml-px border border-t-0 border-[#c8c8c8] text-center leading-[20px] text-[#333]">Liste</div>
              <div className="ml-[9px] leading-[20px] tracking-[-0.2px]">Sélection</div>
            </div>
          </div>
        </div>
      </div>

      {/* Status */}
      <div className="h-[22px] shrink-0 border-t border-[#c8c8c8] flex items-center pl-[6px] pr-[8px]">
        <span className="tracking-[-0.35px]">129 élément(s)</span>
        <svg width="12" height="15" viewBox="0 0 12 15" className="ml-auto"><path d="M0 2 Q6 -1 12 2 V13 Q6 16 0 13 Z" fill="#e8b060" /></svg>
        <span className="ml-[14px] tracking-[-0.6px]">Mode connecté</span>
      </div>
    </div>
  );
}
